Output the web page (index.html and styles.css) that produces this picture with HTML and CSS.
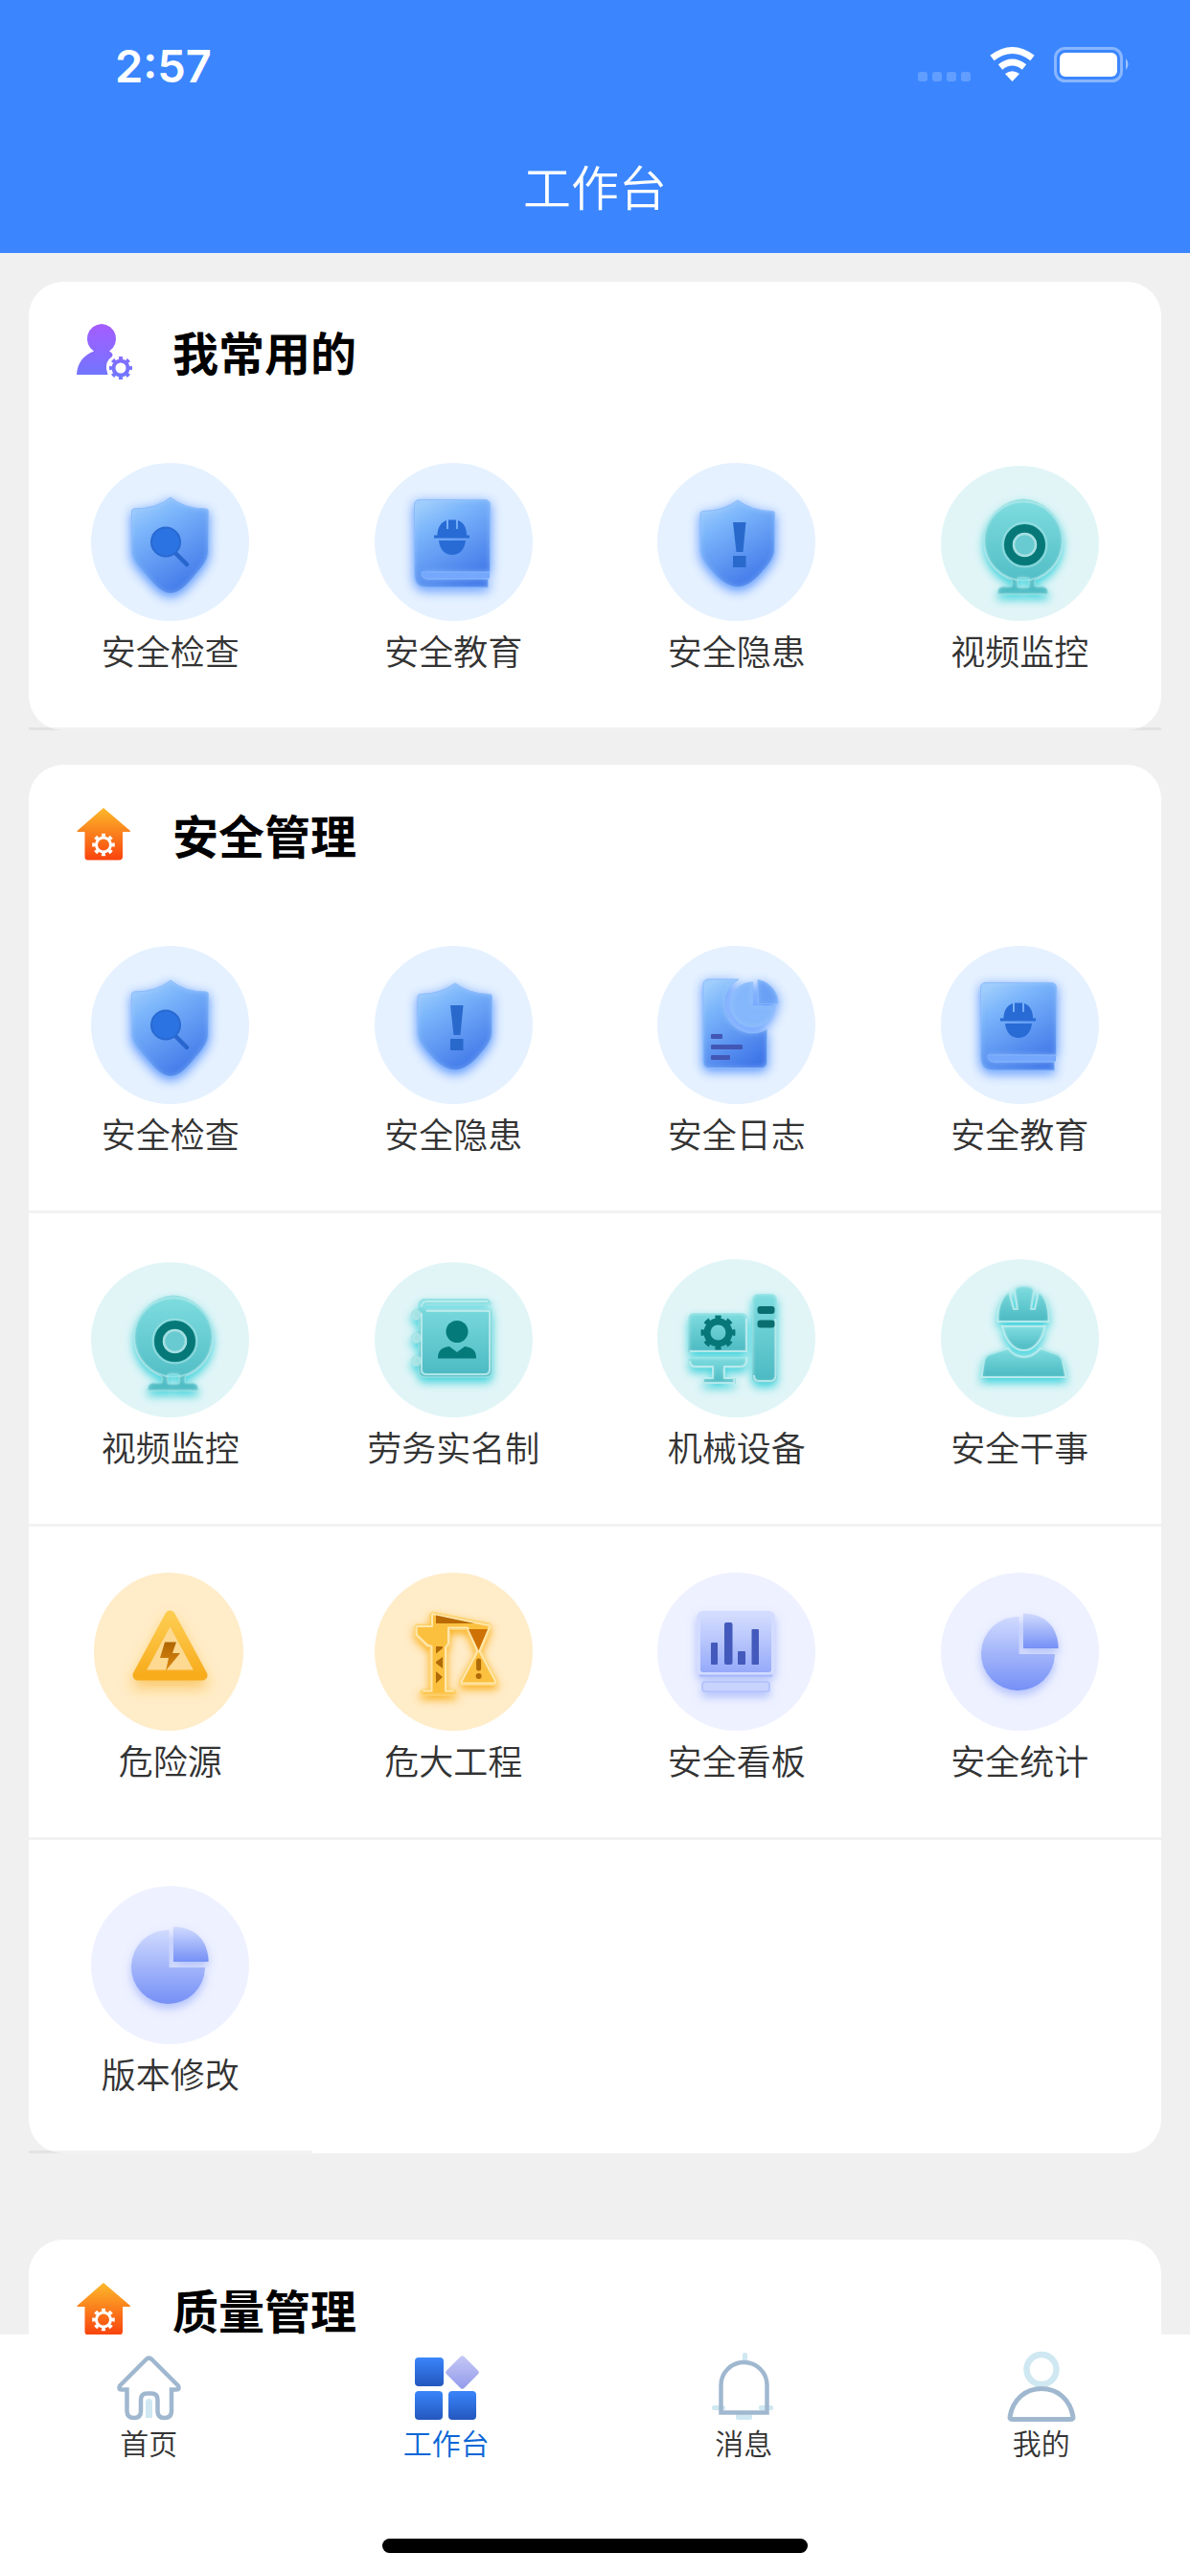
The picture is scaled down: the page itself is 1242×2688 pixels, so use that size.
FILE: index.html
```
<!DOCTYPE html>
<html lang="zh-CN">
<head>
    <meta charset="UTF-8">
    <meta name="viewport" content="width=device-width, initial-scale=1.0">
    <title>工作台</title>
    <link rel="stylesheet" href="styles.css">
</head>
<body>
    <!-- shared icons -->
    <svg class="sprite" aria-hidden="true">
        <defs>
            <linearGradient id="blue" x1="0.2" y1="0" x2="0.7" y2="1">
                <stop offset="0" stop-color="#9fcdfc"/>
                <stop offset="0.25" stop-color="#7cb6fb"/>
                <stop offset="1" stop-color="#3f76e8"/>
            </linearGradient>
            <linearGradient id="teal" x1="0" y1="0" x2="0" y2="1">
                <stop offset="0" stop-color="#7fdde0"/>
                <stop offset="1" stop-color="#4bb9c2"/>
            </linearGradient>
            <linearGradient id="amber" x1="0" y1="0" x2="0" y2="1">
                <stop offset="0" stop-color="#fdcc50"/>
                <stop offset="1" stop-color="#f8ac1d"/>
            </linearGradient>
            <linearGradient id="bolt" x1="0" y1="0" x2="0" y2="1">
                <stop offset="0" stop-color="#b06503"/>
                <stop offset="1" stop-color="#dd8a12"/>
            </linearGradient>
            <linearGradient id="violet" x1="0" y1="0" x2="0" y2="1">
                <stop offset="0" stop-color="#d0dafe"/>
                <stop offset="1" stop-color="#7590f6"/>
            </linearGradient>
            <linearGradient id="board" x1="0" y1="0" x2="0" y2="1">
                <stop offset="0" stop-color="#d5defe"/>
                <stop offset="1" stop-color="#93a8fa"/>
            </linearGradient>
            <linearGradient id="orange" x1="0" y1="0" x2="0" y2="1">
                <stop offset="0" stop-color="#fcb92b"/>
                <stop offset="1" stop-color="#f9430d"/>
            </linearGradient>
            <linearGradient id="purple" gradientUnits="userSpaceOnUse" x1="0" y1="0" x2="0" y2="58">
                <stop offset="0" stop-color="#a45dff"/>
                <stop offset="1" stop-color="#6c78ff"/>
            </linearGradient>
            <linearGradient id="tile" x1="0" y1="0" x2="0" y2="1">
                <stop offset="0" stop-color="#3a85fb"/>
                <stop offset="1" stop-color="#2357bd"/>
            </linearGradient>
            <linearGradient id="diamond" x1="0" y1="0" x2="1" y2="1">
                <stop offset="0" stop-color="#c6c9f6"/>
                <stop offset="1" stop-color="#9299ea"/>
            </linearGradient>
            <!-- outer glow below, light rim inside -->
            <filter id="glow-blue" x="-30%" y="-30%" width="160%" height="160%" color-interpolation-filters="sRGB">
                <feDropShadow in="SourceGraphic" dx="0" dy="3" stdDeviation="6" flood-color="#4d8dff" flood-opacity="0.95" result="drop"/>
                <feComponentTransfer in="SourceAlpha"><feFuncA type="table" tableValues="1 0"/></feComponentTransfer>
                <feGaussianBlur stdDeviation="3" result="inv"/>
                <feFlood flood-color="#a6d0ff" flood-opacity="0.75"/>
                <feComposite in2="inv" operator="in"/>
                <feComposite in2="SourceAlpha" operator="in" result="rim"/>
                <feMerge><feMergeNode in="drop"/><feMergeNode in="rim"/></feMerge>
            </filter>
            <filter id="glow-teal" x="-30%" y="-30%" width="160%" height="160%" color-interpolation-filters="sRGB">
                <feDropShadow in="SourceGraphic" dx="0" dy="5" stdDeviation="5" flood-color="#2fcfd8" flood-opacity="0.9" result="drop"/>
                <feComponentTransfer in="SourceAlpha"><feFuncA type="table" tableValues="1 0"/></feComponentTransfer>
                <feGaussianBlur stdDeviation="2" result="inv"/>
                <feFlood flood-color="#d9f7f7" flood-opacity="0.85"/>
                <feComposite in2="inv" operator="in"/>
                <feComposite in2="SourceAlpha" operator="in" result="rim"/>
                <feMerge><feMergeNode in="drop"/><feMergeNode in="rim"/></feMerge>
            </filter>
            <filter id="glow-amber" x="-30%" y="-30%" width="160%" height="170%" color-interpolation-filters="sRGB">
                <feDropShadow in="SourceGraphic" dx="0" dy="4" stdDeviation="4" flood-color="#fbab0f" flood-opacity="0.9" result="drop"/>
                <feComponentTransfer in="SourceAlpha"><feFuncA type="table" tableValues="1 0"/></feComponentTransfer>
                <feGaussianBlur stdDeviation="2" result="inv"/>
                <feFlood flood-color="#fff3cf" flood-opacity="0.9"/>
                <feComposite in2="inv" operator="in"/>
                <feComposite in2="SourceAlpha" operator="in" result="rim"/>
                <feMerge><feMergeNode in="drop"/><feMergeNode in="rim"/></feMerge>
            </filter>
            <filter id="drop-amber" x="-30%" y="-30%" width="160%" height="180%">
                <feDropShadow dx="0" dy="8" stdDeviation="7" flood-color="#f8ad20" flood-opacity="0.55"/>
            </filter>
            <filter id="glow-violet" x="-30%" y="-30%" width="160%" height="170%">
                <feDropShadow dx="0" dy="5" stdDeviation="5" flood-color="#7690f8" flood-opacity="0.5"/>
            </filter>
        </defs>

        <symbol id="i-check" viewBox="0 0 165 165">
            <circle cx="82.5" cy="82.5" r="82.5" fill="#e5f1ff"/>
            <path filter="url(#glow-blue)" fill="url(#blue)" stroke="#7fb1fb" d="M83 36Q97 48 120 48Q122.500 48 122.500 51V92C122.500 103 114 111 104 123C96 132 90 136.500 83 136.500C76 136.500 70 132 62 123C52 111 42.500 103 42.500 92V51Q42.500 48 45 48Q69 48 83 36Z"/>
            <path d="M88 94L100 106" stroke="#2865cc" stroke-width="4.500" stroke-linecap="round"/>
            <circle cx="78" cy="82.500" r="15" fill="#2b73e2" stroke="#2869d2" stroke-width="2"/>
        </symbol>

        <symbol id="i-book" viewBox="0 0 165 165">
            <circle cx="82.5" cy="82.5" r="82.5" fill="#e5f1ff"/>
            <path filter="url(#glow-blue)" fill="url(#blue)" stroke="#7fb1fb" d="M47 38.500H115Q120.500 38.500 120.500 44V114H49Q49 121 56 121H118.500V130H54Q41.500 130 41.500 116V44Q41.500 38.500 47 38.500Z"/>
            <path fill="#75a8fd" d="M49 114.500H120V120.500H56Q50 120.500 49 114.500Z"/>
            <path fill="#286bd5" d="M65.500 75.500C65.500 68 69 62 75 60V69H77V59.500H85V69H87V60C93 62 96 68 96 75.500H99V78.500H62V75.500ZM67 81H95C94 91 88 96 81 96C74 96 68 91 67 81Z"/>
        </symbol>

        <symbol id="i-hidden" viewBox="0 0 165 165">
            <circle cx="82.5" cy="82.5" r="82.5" fill="#e5f1ff"/>
            <path filter="url(#glow-blue)" fill="url(#blue)" stroke="#7fb1fb" d="M84 39Q98 50 120 50.500Q122.500 50.500 122.500 53V90C122.500 100 115 108 106 118C98 126 91 130 84 130C77 130 69 126 61 118C52 108 45 100 45 90V53Q45 50.500 48 50.500Q70 50 84 39Z"/>
            <path fill="#2a69cc" d="M79 62H92.500L89.500 93H82.500ZM79 97H92.500V109H79Z"/>
        </symbol>

        <symbol id="i-video" viewBox="0 0 165 165">
            <ellipse cx="82.5" cy="84" rx="82.5" ry="81" fill="#e1f5f7"/>
            <path filter="url(#glow-teal)" fill="url(#teal)" fill-rule="evenodd" stroke="#7dd5d9" d="M86 38A43.500 43.500 0 0 1 98 122.500V129H107Q112 130 112 137H59Q59 130 64 129H74V122.500A43.500 43.500 0 0 1 86 38ZM80 120V130H92V120Z"/>
            <circle cx="86" cy="81.500" r="41" fill="none" stroke="#b5eaec" stroke-width="2" opacity="0.6"/>
            <circle cx="87.500" cy="85.500" r="23" fill="none" stroke="#a5e2e5" stroke-width="2" opacity="0.6"/>
            <circle cx="87.500" cy="85.500" r="17" fill="#68cbd1" stroke="#067878" stroke-width="9"/>
            <circle cx="87.500" cy="85.500" r="11.500" fill="none" stroke="#a5dfe2" stroke-width="2.500"/>
        </symbol>

        <symbol id="i-diary" viewBox="0 0 165 165">
            <circle cx="82.5" cy="82.5" r="82.5" fill="#e5f1ff"/>
            <g filter="url(#glow-blue)" stroke="#7fb1fb">
                <path fill="url(#blue)" d="M53 35H85A28 28 0 0 0 114.500 87V121Q114.500 127.500 108 127.500H54Q48 127.500 48 121V41Q48 35 53 35Z"/>
                <path fill="#84b7fb" d="M99.500 38V62.500H123A23.500 23.500 0 1 1 99.500 38Z"/>
                <path fill="#6aa0f5" d="M105 35.500A25 25 0 0 1 126 60.500H105Z"/>
            </g>
            <g fill="#4257b5">
                <rect x="56" y="92" width="12" height="5" rx="1"/>
                <rect x="56" y="103" width="33" height="5" rx="1"/>
                <rect x="56" y="114" width="20" height="5" rx="1"/>
            </g>
        </symbol>

        <symbol id="i-roster" viewBox="0 0 165 165">
            <ellipse cx="82.5" cy="84" rx="82.5" ry="81" fill="#e1f5f7"/>
            <g filter="url(#glow-teal)" stroke="#7dd5d9">
                <path fill="url(#teal)" d="M122 47Q121 41.500 116 41.500H52Q46 41.500 46 48V117Q46 123 52 123H117Q122.500 123 122.500 117V52H52V47Z"/>
                <g fill="#a3e2e4">
                    <circle cx="44" cy="58" r="5.500"/>
                    <circle cx="44" cy="82" r="5.500"/>
                    <circle cx="44" cy="106" r="5.500"/>
                </g>
            </g>
            <path fill="none" stroke="#c4eef0" stroke-width="2" opacity="0.8" d="M49 56V115Q49 120 54 120H115Q120 120 120 115V54H54M49 50Q49 44 55 44H118"/>
            <circle cx="86" cy="75.500" r="11.500" fill="#047a7b"/>
            <path fill="#047a7b" d="M66 103.500C66 95 70 92 78 91L86 97L94 91C102 92 106 95 106 103.500Z"/>
        </symbol>

        <symbol id="i-machine" viewBox="0 0 165 165">
            <circle cx="82.5" cy="82.5" r="82.5" fill="#e1f5f7"/>
            <g filter="url(#glow-teal)" fill="url(#teal)">
                <path d="M38 56H88Q94 56 94 62V97H32.500V62Q32.500 56 38 56Z"/>
                <path d="M32.500 102H94V106Q94 113.500 86 113.500H70V124H81.500V129.500H47V124H57.500V113.500H40Q32.500 113.500 32.500 106Z"/>
                <rect x="99" y="36" width="26" height="92.500" rx="6"/>
            </g>
            <path fill="none" stroke="#c4eef0" stroke-width="2" opacity="0.8" d="M34 96H93V62M93 103V106Q93 112 86 112H70V124H80V129H48V124H58V112H40Q34 112 34 106M101 121Q101 127 106 127H118Q123.500 127 123.500 121V62"/>
            <circle cx="63.500" cy="76.500" r="11.500" fill="none" stroke="#08777a" stroke-width="7"/>
            <circle cx="63.500" cy="76.500" r="15.500" fill="none" stroke="#08777a" stroke-width="5" pathLength="16" stroke-dasharray="1 1" stroke-dashoffset="0.5"/>
            <rect x="104.500" y="49" width="18" height="8" rx="3" fill="#0a6e70"/>
            <rect x="104.500" y="63.500" width="18" height="8" rx="3" fill="#0a6e70"/>
        </symbol>

        <symbol id="i-worker" viewBox="0 0 165 165">
            <circle cx="82.5" cy="82.5" r="82.5" fill="#e1f5f7"/>
            <g filter="url(#glow-teal)" fill="url(#teal)" stroke="#a8e5e8" stroke-width="2">
                <path d="M59.500 65C59 50 63 40 71 34L76 52H80L77 33Q77 28 86.500 28Q97 28 97 33L94 52H98L102 34C110 40 113 50 112.500 65Z"/>
                <path d="M64 70H108.500L106 79C102 88 95 95 86.500 95C78 95 71 88 67 79Z"/>
                <path d="M70 93Q77 102 86.500 102Q96 102 104 93L121 99Q126 101 127 106L130.500 123H42.500L45 106Q46 101 51 99Z"/>
            </g>
        </symbol>

        <symbol id="i-danger" viewBox="0 0 165 165">
            <ellipse cx="81" cy="82.5" rx="78" ry="82.5" fill="#ffecc8"/>
            <path filter="url(#drop-amber)" fill="#fdd992" stroke="url(#amber)" stroke-width="11" stroke-linejoin="round" d="M82.500 45L116 107H49Z"/>
            <path fill="url(#bolt)" d="M77 72.500H89L85 84H93L78 102.500L81 89H72Z"/>
        </symbol>

        <symbol id="i-crane" viewBox="0 0 165 165">
            <circle cx="82.5" cy="82.5" r="82.5" fill="#ffecc8"/>
            <path filter="url(#glow-amber)" fill="#fcc03f" stroke="#fdc445" stroke-linejoin="round" d="M60 41L120 53Q123 55 121 58L111 82L128 113Q129 117.500 125 117.500H92Q88 117.500 89 113L106 82L96 59.500H78.500V75L75.500 79V122H83Q86 122 86 125Q86 128 83 128H50Q47.500 128 47.500 125Q47.500 122 50 122H57.500V78L54 77L42.500 66Q41.500 62 41.500 56Q42 54 45 54H57.500V43Z"/>
            <path fill="none" stroke="#ffe7ae" stroke-width="2" stroke-linejoin="round" d="M60 43L119 55Q121 56 119.500 58L109.500 82L126 113Q127 115.500 124 115.500H93Q90 115.500 91 113L107.500 82L97 57.500H77V74L74 78V123.500H83M60 43V56H45Q43.500 56 43.500 58Q43.500 63 44 65L55 75.500L59.500 77V123.500H50"/>
            <path fill="#b96a05" d="M64 44.500L104 53H64Z"/>
            <path fill="#cf7206" d="M98 59H118L108.500 81Z"/>
            <path fill="#b06a08" d="M64 77H71V79L64 84.500ZM71 88V100L64 94.500V93ZM64 103L71 109L64 115.500Z"/>
            <path d="M108.600 92V100" stroke="#b06a08" stroke-width="5" stroke-linecap="round"/>
            <circle cx="108.600" cy="108" r="3" fill="#b06a08"/>
        </symbol>

        <symbol id="i-board" viewBox="0 0 165 165">
            <circle cx="82.5" cy="82.5" r="82.5" fill="#eef1ff"/>
            <g filter="url(#glow-violet)" stroke="#d3dcff" stroke-width="4">
                <rect x="43" y="42" width="78" height="64" rx="5" fill="url(#board)"/>
                <rect x="47" y="114" width="70" height="10" rx="3" fill="#c9d4fe" stroke="#b6c4fd" stroke-width="2"/>
            </g>
            <path d="M44 107.500H120" stroke="#a5b6fb" stroke-width="2"/>
            <g fill="#435abc">
                <rect x="56" y="73" width="7" height="23" rx="1"/>
                <rect x="70" y="52" width="8.500" height="44" rx="2"/>
                <rect x="84" y="82" width="8" height="14" rx="1"/>
                <rect x="98.500" y="59" width="7.500" height="37" rx="1"/>
            </g>
        </symbol>

        <symbol id="i-pie" viewBox="0 0 165 165">
            <circle cx="82.5" cy="82.5" r="82.5" fill="#eef1ff"/>
            <g filter="url(#glow-violet)" fill="url(#violet)">
                <path d="M81.500 46V85H119A38.500 38.500 0 1 1 81.500 46Z"/>
                <path d="M86 42.500Q119 44 122.500 75V79H86Z"/>
            </g>
        </symbol>

        <symbol id="i-house" viewBox="0 0 60 60">
            <path fill="url(#orange)" d="M30 0L58 24V25H50V51Q50 54.500 46 54.500H14Q10.500 54.500 10.500 51V25H2.500V24Z"/>
            <circle cx="30" cy="38.500" r="7.500" fill="none" stroke="#fff" stroke-width="3"/>
            <circle cx="30" cy="38.500" r="9.800" fill="none" stroke="#fff" stroke-width="4" pathLength="16" stroke-dasharray="1 1" stroke-dashoffset="0.500"/>
        </symbol>
    </svg>

    <header class="header">
        <div class="status">
            <span class="time">2:57</span>
            <svg class="signal" viewBox="0 0 222 40" aria-hidden="true">
                <g fill="#fff" opacity="0.2">
                    <rect x="0" y="27" width="10" height="10" rx="3"/>
                    <rect x="15" y="27" width="10" height="10" rx="3"/>
                    <rect x="30" y="27" width="10" height="10" rx="3"/>
                    <rect x="45" y="27" width="10" height="10" rx="3"/>
                </g>
                <g fill="none" stroke="#fff" stroke-width="7">
                    <path d="M77.500 12.500Q98.500 -3.500 119.500 12.500"/>
                    <path d="M86 22Q98.500 12 111 22"/>
                </g>
                <path fill="#fff" d="M98.500 37L91 29Q98.500 23.500 106 29Z"/>
                <rect x="143.500" y="2.500" width="69" height="34" rx="10" fill="none" stroke="#fff" stroke-width="3" opacity="0.4"/>
                <rect x="148" y="7" width="60" height="25" rx="6" fill="#fff"/>
                <path d="M217 13Q222 19 217 25Z" fill="#fff" opacity="0.5"/>
            </svg>
        </div>
        <h1>工作台</h1>
    </header>

    <main class="content">
        <section class="card">
            <h2>
                <svg viewBox="0 0 60 60" aria-hidden="true">
                    <path fill="url(#purple)" d="M28 -1A15.500 15.500 0 0 1 36 27.500Q41 30 39 33Q32 38 33 46Q34 49 34.500 52H2Q3 34 20 27.500A15.500 15.500 0 0 1 28 -1Z"/>
                    <circle cx="48" cy="45" r="7.500" fill="none" stroke="url(#purple)" stroke-width="4"/>
                    <circle cx="48" cy="45" r="10" fill="none" stroke="url(#purple)" stroke-width="4" pathLength="16" stroke-dasharray="1 1" stroke-dashoffset="0.500"/>
                </svg>
                我常用的
            </h2>
            <div class="grid">
                <a class="item" href="#"><svg><use href="#i-check"/></svg>安全检查</a>
                <a class="item" href="#"><svg><use href="#i-book"/></svg>安全教育</a>
                <a class="item" href="#"><svg><use href="#i-hidden"/></svg>安全隐患</a>
                <a class="item" href="#"><svg><use href="#i-video"/></svg>视频监控</a>
            </div>
        </section>

        <section class="card card-large">
            <h2><svg aria-hidden="true"><use href="#i-house"/></svg>安全管理</h2>
            <div class="grid">
                <a class="item" href="#"><svg><use href="#i-check"/></svg>安全检查</a>
                <a class="item" href="#"><svg><use href="#i-hidden"/></svg>安全隐患</a>
                <a class="item" href="#"><svg><use href="#i-diary"/></svg>安全日志</a>
                <a class="item" href="#"><svg><use href="#i-book"/></svg>安全教育</a>
                <a class="item" href="#"><svg><use href="#i-video"/></svg>视频监控</a>
                <a class="item" href="#"><svg><use href="#i-roster"/></svg>劳务实名制</a>
                <a class="item" href="#"><svg><use href="#i-machine"/></svg>机械设备</a>
                <a class="item" href="#"><svg><use href="#i-worker"/></svg>安全干事</a>
                <a class="item" href="#"><svg><use href="#i-danger"/></svg>危险源</a>
                <a class="item" href="#"><svg><use href="#i-crane"/></svg>危大工程</a>
                <a class="item" href="#"><svg><use href="#i-board"/></svg>安全看板</a>
                <a class="item" href="#"><svg><use href="#i-pie"/></svg>安全统计</a>
                <a class="item" href="#"><svg><use href="#i-pie"/></svg>版本修改</a>
            </div>
        </section>

        <section class="card">
            <h2><svg aria-hidden="true"><use href="#i-house"/></svg>质量管理</h2>
        </section>
    </main>

    <footer class="footer">
        <nav class="tabs">
            <a class="tab" href="#">
                <svg viewBox="0 0 72 72" aria-hidden="true">
                    <path fill="#cfe8f2" d="M33 69V53Q33 49 36.500 49Q40 49 40 53V69Z"/>
                    <path fill="none" stroke="#a0b8cf" stroke-width="4.500" d="M33.500 8Q36.500 5 39.500 8L67 35.500Q69 39.500 65 39.500H60V62Q60 69 52.500 69Q45.500 69 45.500 62V50Q45.500 43.500 39 43.500H34.500Q28 43.500 28 50V62Q28 69 21 69Q13.500 69 13.500 62V39.500H8Q4 39.500 6 35.500Z"/>
                </svg>
                首页
            </a>
            <a class="tab active" href="#">
                <svg viewBox="0 0 72 72" aria-hidden="true">
                    <rect x="3" y="6" width="30" height="30" rx="4" fill="url(#tile)"/>
                    <rect x="3" y="41" width="29" height="30" rx="4" fill="url(#tile)"/>
                    <rect x="38" y="41" width="29" height="30" rx="4" fill="url(#tile)"/>
                    <rect x="39.500" y="8.500" width="26" height="26" rx="3" fill="url(#diamond)" transform="rotate(45 52.500 21.500)"/>
                </svg>
                工作台
            </a>
            <a class="tab" href="#">
                <svg viewBox="0 0 72 72" aria-hidden="true">
                    <g fill="#cfe8f2">
                        <rect x="35" y="1" width="5" height="10" rx="2"/>
                        <rect x="3" y="56" width="14" height="5" rx="2"/>
                        <rect x="52" y="56" width="15" height="5" rx="2"/>
                        <rect x="28" y="65" width="17" height="6" rx="2"/>
                    </g>
                    <path fill="none" stroke="#a0b8cf" stroke-width="4.500" d="M12.500 63.500V35A24 24 0 0 1 60.500 35V63.500Z"/>
                </svg>
                消息
            </a>
            <a class="tab" href="#">
                <svg viewBox="0 0 72 72" aria-hidden="true">
                    <circle cx="36" cy="18.500" r="15.500" fill="none" stroke="#cfe8f2" stroke-width="6.500"/>
                    <path fill="none" stroke="#a0b8cf" stroke-width="5" stroke-linejoin="round" d="M3 68C6 50 19 38.500 36 38.500C53 38.500 66 50 69 68Q69.500 70.500 66 70.500H6Q2.500 70.500 3 68Z"/>
                </svg>
                我的
            </a>
        </nav>
        <div class="home-bar"></div>
    </footer>
</body>
</html>
```
FILE: styles.css
```
* {
    box-sizing: border-box;
}
body {
    margin: 0;
    height: 100vh;
    display: flex;
    flex-direction: column;
    background-color: #f0f0f0;
    font-family: "Noto Sans CJK SC", "PingFang SC", sans-serif;
    font-weight: 350;
    color: #333;
}
a {
    color: inherit;
    text-decoration: none;
}
svg {
    display: block;
    overflow: visible;
}
.sprite {
    position: absolute;
    width: 0;
    height: 0;
}

/* top bar */
.header {
    flex: none;
    background-color: #3b86ff;
    color: #fff;
}
.status {
    display: flex;
    justify-content: space-between;
    align-items: center;
    height: 136px;
    padding: 0 62px 0 120px;
}
.time {
    font-family: Inter, sans-serif;
    font-size: 47px;
    font-weight: 600;
}
.signal {
    width: 222px;
    height: 40px;
}
.header h1 {
    margin: 0;
    padding-bottom: 14px;
    font-size: 50px;
    font-weight: 350;
    line-height: 114px;
    text-align: center;
}

/* cards */
.content {
    flex: 1;
    min-height: 0;
    overflow-y: auto;
    scrollbar-width: none;
    padding: 30px;
}
.card {
    margin-bottom: 36px;
    background-color: #fff;
    border-radius: 36px;
}
.card-large {
    margin-bottom: 90px;
}
.card h2 {
    display: flex;
    align-items: flex-start;
    gap: 42px;
    margin: 0;
    padding: 45px 48px 36px;
    font-size: 48px;
    font-weight: 700;
    line-height: 54px;
    color: #000;
}
.card h2 svg {
    width: 60px;
    height: 60px;
}
.grid {
    display: grid;
    grid-template-columns: repeat(4, 1fr);
}
.item {
    display: flex;
    flex-direction: column;
    align-items: center;
    padding: 48px 0 51px;
    border-bottom: 3px solid rgba(0, 0, 0, 0.05);
    font-size: 36px;
    line-height: 60px;
}
.item svg {
    width: 165px;
    height: 165px;
}

/* bottom tabs */
.footer {
    flex: none;
    background-color: #fff;
    padding-bottom: 24px;
}
.tabs {
    display: grid;
    grid-template-columns: repeat(4, 1fr);
    padding: 18px 0 79px;
}
.tab {
    display: flex;
    flex-direction: column;
    align-items: center;
    font-size: 30px;
    line-height: 44px;
}
.tab svg {
    width: 72px;
    height: 72px;
}
.tab.active {
    color: #0a66d6;
}
.home-bar {
    width: 444px;
    height: 15px;
    margin: 0 auto;
    border-radius: 8px;
    background-color: #000;
}
```
